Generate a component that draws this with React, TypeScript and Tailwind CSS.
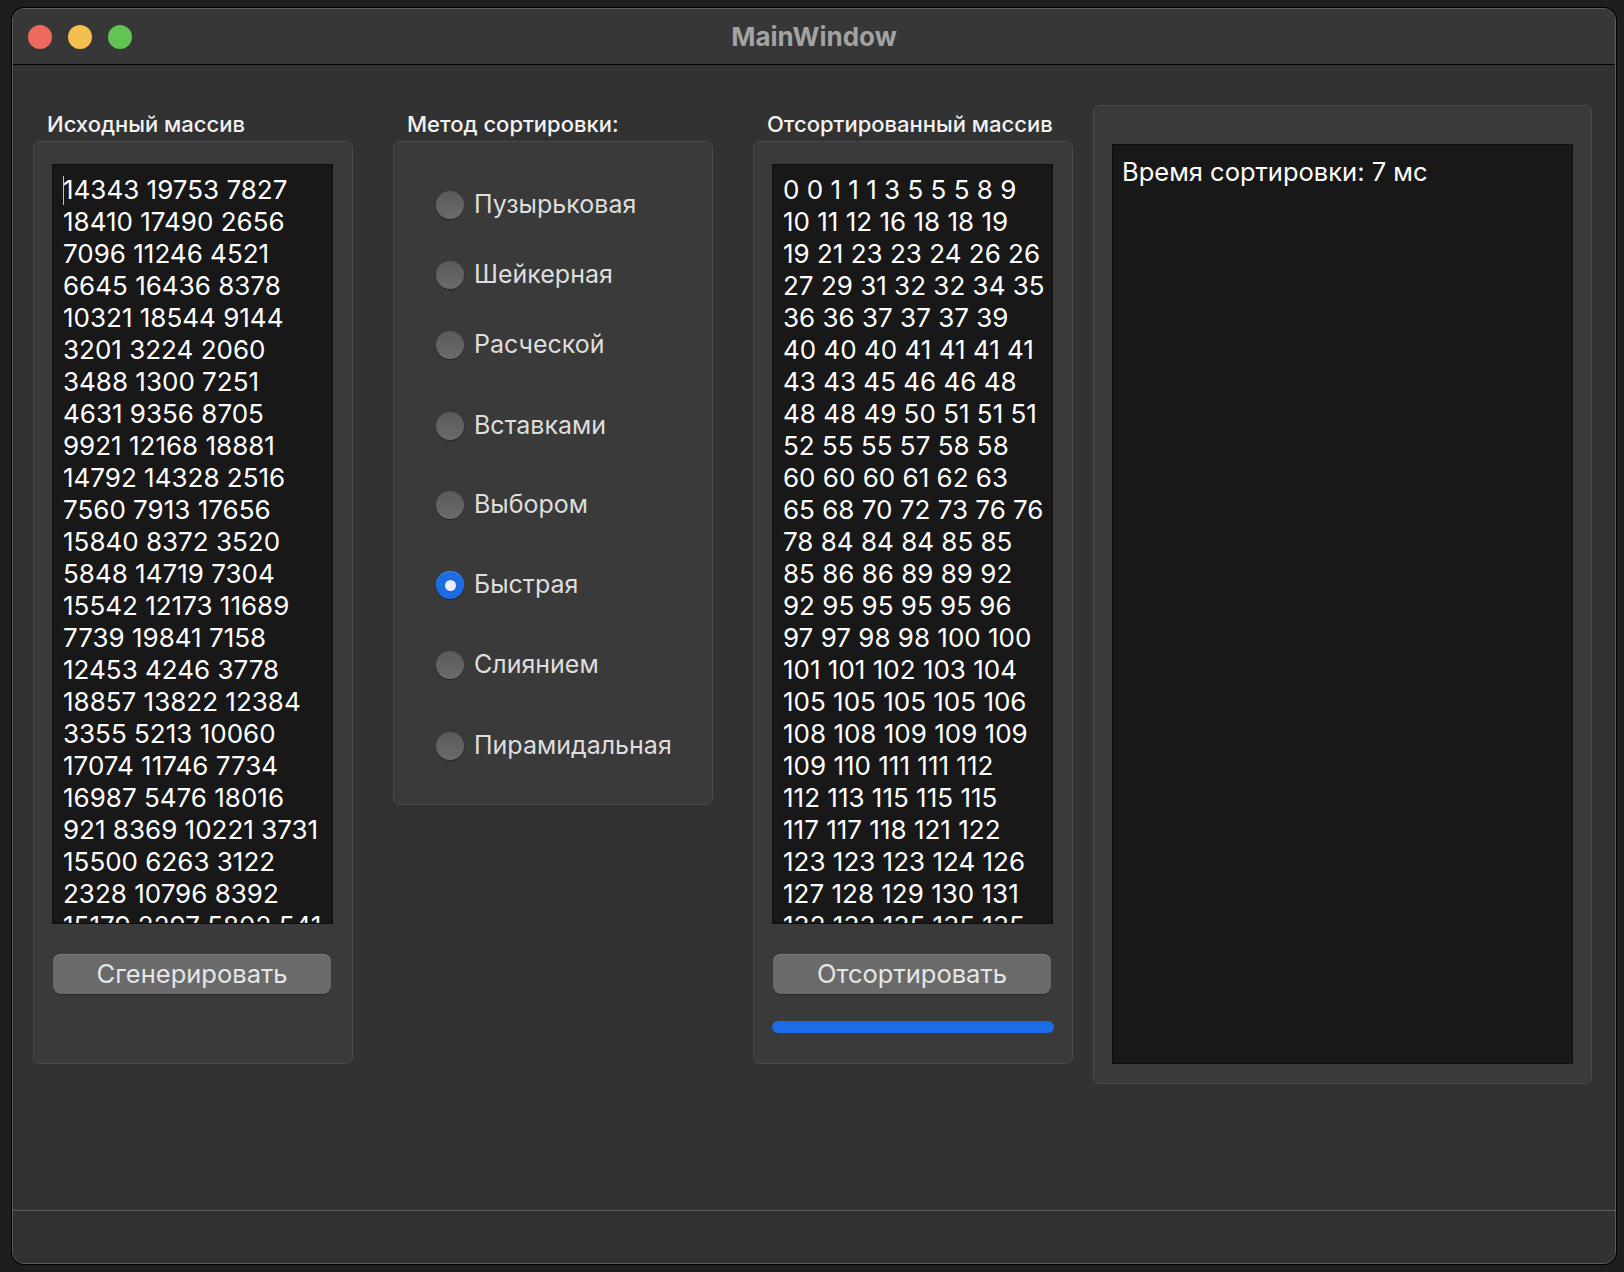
const source = [
  "14343 19753 7827",
  "18410 17490 2656",
  "7096 11246 4521",
  "6645 16436 8378",
  "10321 18544 9144",
  "3201 3224 2060",
  "3488 1300 7251",
  "4631 9356 8705",
  "9921 12168 18881",
  "14792 14328 2516",
  "7560 7913 17656",
  "15840 8372 3520",
  "5848 14719 7304",
  "15542 12173 11689",
  "7739 19841 7158",
  "12453 4246 3778",
  "18857 13822 12384",
  "3355 5213 10060",
  "17074 11746 7734",
  "16987 5476 18016",
  "921 8369 10221 3731",
  "15500 6263 3122",
  "2328 10796 8392",
  "15179 2297 5802 541",
]

const sorted = [
  "0 0 1 1 1 3 5 5 5 8 9",
  "10 11 12 16 18 18 19",
  "19 21 23 23 24 26 26",
  "27 29 31 32 32 34 35",
  "36 36 37 37 37 39",
  "40 40 40 41 41 41 41",
  "43 43 45 46 46 48",
  "48 48 49 50 51 51 51",
  "52 55 55 57 58 58",
  "60 60 60 61 62 63",
  "65 68 70 72 73 76 76",
  "78 84 84 84 85 85",
  "85 86 86 89 89 92",
  "92 95 95 95 95 96",
  "97 97 98 98 100 100",
  "101 101 102 103 104",
  "105 105 105 105 106",
  "108 108 109 109 109",
  "109 110 111 111 112",
  "112 113 115 115 115",
  "117 117 118 121 122",
  "123 123 123 124 126",
  "127 128 129 130 131",
  "132 133 135 135 135",
]

const methods = [
  { name: "Пузырьковая", mt: "mt-[49px]" },
  { name: "Шейкерная", mt: "mt-[42px]" },
  { name: "Расческой", mt: "mt-[42px]" },
  { name: "Вставками", mt: "mt-[53px]" },
  { name: "Выбором", mt: "mt-[51px]" },
  { name: "Быстрая", mt: "mt-[52px]", checked: true },
  { name: "Слиянием", mt: "mt-[52px]" },
  { name: "Пирамидальная", mt: "mt-[53px]" },
]

function GroupLabel({ text }: { text: string }) {
  return (
    <div className="h-[36px] pl-[14px] pt-[6px] text-[22px] leading-[26px] font-medium text-[#f2f2f2]">
      {text}
    </div>
  )
}

function TextArea({ lines, cursor }: { lines: string[]; cursor?: boolean }) {
  return (
    <div className="w-[281px] h-[760px] overflow-hidden bg-[#181818] border border-[#0d0d0d] pl-[10px] pt-[9px] text-[26px] leading-[32px] text-white whitespace-pre">
      {lines.map((l, i) => (
        <div key={i}>
          {cursor && i === 0 && <span className="inline-block w-px h-[29px] bg-[#c4c4c4] align-[-6px] -mr-px" />}
          {l}
        </div>
      ))}
    </div>
  )
}

function Button({ label }: { label: string }) {
  return (
    <button className="ml-[1px] w-[278px] h-[40px] rounded-[8px] bg-[#6a6a6a] shadow-[inset_0_1px_0_#7c7c7c,0_1px_1px_rgba(0,0,0,0.35)] text-[25.5px] leading-[40px] text-[#e6e6e6]">
      {label}
    </button>
  )
}

function Radio({ name, checked, mt }: { name: string; checked?: boolean; mt: string }) {
  return (
    <div className={`${mt} flex items-center h-[28px] pl-[42px]`}>
      {checked ? (
        <div className="w-[28px] h-[28px] rounded-full bg-[#1c6de3] shadow-[inset_0_1px_0_#3b86f0,0_1px_1px_rgba(0,0,0,0.4)] flex items-center justify-center">
          <div className="w-[11px] h-[11px] rounded-full bg-[#e8eefb]" />
        </div>
      ) : (
        <div className="w-[28px] h-[28px] rounded-full bg-gradient-to-b from-[#5a5a5a] to-[#6b6b6b] shadow-[0_1px_1px_rgba(0,0,0,0.4)]" />
      )}
      <span className="ml-[10px] text-[25px] text-[#dedede]">{name}</span>
    </div>
  )
}

export default function App() {
  return (
    <div className="w-[1624px] h-[1272px] bg-[#1e1e1e] pt-[8px] pl-[12px] font-[Inter,'Noto_Sans',sans-serif] overflow-hidden">
      <div className="w-[1604px] h-[1256px] rounded-[12px] border border-[#5c5c5c] ring-1 ring-black bg-[#323232] overflow-hidden">
        {/* title bar */}
        <div className="h-[55px] bg-[#373737] grid grid-cols-[1fr_auto_1fr] items-center">
          <div className="flex items-center gap-[16px] pl-[15px]">
            <div className="w-[24px] h-[24px] rounded-full bg-[#ed6a5e]" />
            <div className="w-[24px] h-[24px] rounded-full bg-[#f5bf4f]" />
            <div className="w-[24px] h-[24px] rounded-full bg-[#61c554]" />
          </div>
          <div className="text-[26px] font-bold text-[#a3a3a3]">MainWindow</div>
          <div />
        </div>
        <div className="h-px bg-black" />

        {/* body */}
        <div className="h-[1145px] flex items-start pl-[20px] pt-[40px]">
          <div className="w-[320px] flex flex-col">
            <GroupLabel text="Исходный массив" />
            <div className="h-[923px] rounded-[7px] border border-[#4a4a4a] bg-[#3a3a3a] pl-[18px] pt-[22px]">
              <TextArea lines={source} cursor />
              <div className="mt-[30px]">
                <Button label="Сгенерировать" />
              </div>
            </div>
          </div>

          <div className="ml-[40px] w-[320px] flex flex-col">
            <GroupLabel text="Метод сортировки:" />
            <div className="h-[664px] rounded-[7px] border border-[#4a4a4a] bg-[#3a3a3a]">
              {methods.map((m) => (
                <Radio key={m.name} name={m.name} checked={m.checked} mt={m.mt} />
              ))}
            </div>
          </div>

          <div className="ml-[40px] w-[320px] flex flex-col">
            <GroupLabel text="Отсортированный массив" />
            <div className="h-[923px] rounded-[7px] border border-[#4a4a4a] bg-[#3a3a3a] pl-[18px] pt-[22px]">
              <TextArea lines={sorted} />
              <div className="mt-[30px]">
                <Button label="Отсортировать" />
              </div>
              <div className="mt-[27px] w-[282px] h-[12px] rounded-full bg-[#1b6ce6]" />
            </div>
          </div>

          <div className="ml-[20px] w-[499px] h-[979px] rounded-[7px] border border-[#4a4a4a] bg-[#3a3a3a] pl-[18px] pt-[38px]">
            <div className="w-[461px] h-[920px] bg-[#181818] border border-[#0d0d0d] pl-[9px] pt-[11px] text-[25.5px] leading-[32px] text-white">
              Время сортировки: 7 мс
            </div>
          </div>
        </div>

        {/* status bar */}
        <div className="h-[53px] border-t border-[#5e5e5e] bg-[#323232]" />
      </div>
    </div>
  )
}
